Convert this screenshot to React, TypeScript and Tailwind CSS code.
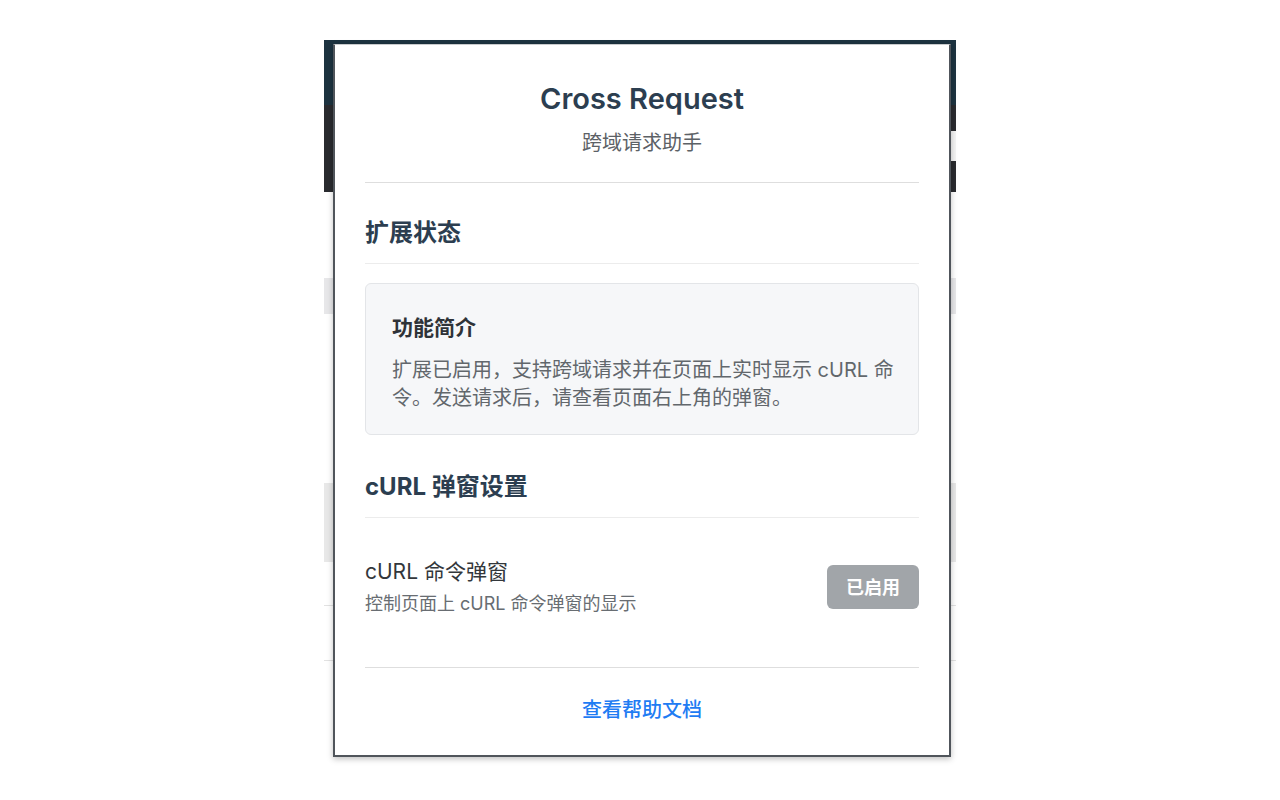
const font = { fontFamily: 'Inter, "Noto Sans CJK SC", sans-serif' };

function Backdrop() {
  return (
    <div className="flex w-full flex-col">
      <div className="h-[65px] bg-[#1d3340]" />
      <div className="flex h-[87px] flex-col bg-[#2a2b2f]">
        <div className="mt-[26px] ml-auto h-[30px] w-[12px] bg-[#f4f4f4]" />
      </div>
      <div className="h-[86px] bg-white" />
      <div className="h-[36px] bg-[#e7e7e9]" />
      <div className="h-[169px] bg-white" />
      <div className="h-[79px] bg-[#e8e8e8]" />
      <div className="h-[43px] bg-white" />
      <div className="h-px bg-[#e2e2e2]" />
      <div className="h-[54px] bg-white" />
      <div className="h-px bg-[#e2e2e2]" />
      <div className="h-[99px] bg-white" />
    </div>
  );
}

function Popup() {
  return (
    <div
      className="absolute top-[4px] left-[9px] flex h-[713px] w-[618px] flex-col border-x-2 border-b-2 border-t border-[#50555b] border-t-[#c9cbcd] bg-white px-[30px] shadow-[0_2px_6px_rgba(0,0,0,0.25)]"
      style={font}
    >
      <div className="flex flex-col items-center border-b border-[#dedede] pt-[36px] pb-[25px]">
        <h1 className="text-[29px] leading-[36px] font-semibold text-[#2c3e50]">Cross Request</h1>
        <p className="mt-[12px] text-[20px] leading-[28px] text-[#5c6166]">跨域请求助手</p>
      </div>

      <h2 className="mt-[34px] border-b border-[#ececec] pb-[14px] text-[24px] leading-[32px] font-bold text-[#2c3e50]">
        扩展状态
      </h2>

      <div className="mt-[19px] rounded-md border border-[#e3e5e8] bg-[#f6f7f9] pt-[30px] pr-[20px] pb-[22px] pl-[26px]">
        <h3 className="text-[21px] leading-[28px] font-semibold text-[#2f3338]">功能简介</h3>
        <p className="mt-[14px] text-[20px] leading-[28px] text-[#62676c]">
          扩展已启用，支持跨域请求并在页面上实时显示 cURL 命<br />
          令。发送请求后，请查看页面右上角的弹窗。
        </p>
      </div>

      <h2 className="mt-[36px] border-b border-[#ececec] pb-[14px] text-[24px] leading-[32px] font-bold text-[#2c3e50]">
        cURL 弹窗设置
      </h2>

      <div className="flex items-center justify-between border-b border-[#dedede] pt-[39px] pb-[50px]">
        <div className="flex flex-col">
          <span className="text-[21px] leading-[30px] text-[#33373b]">cURL 命令弹窗</span>
          <span className="mt-[4px] text-[18px] leading-[26px] text-[#686d72]">控制页面上 cURL 命令弹窗的显示</span>
        </div>
        <button className="h-[44px] w-[92px] rounded-md bg-[#a1a5a9] text-[18px] font-bold text-white">
          已启用
        </button>
      </div>

      <div className="flex justify-center pt-[28px]">
        <a className="text-[20px] leading-[28px] font-medium text-[#1f7cf3]">查看帮助文档</a>
      </div>
    </div>
  );
}

export default function App() {
  return (
    <div className="min-h-[800px] w-full bg-white pt-[40px]">
      <div className="relative mx-auto w-[632px]">
        <Backdrop />
        <Popup />
      </div>
    </div>
  );
}
